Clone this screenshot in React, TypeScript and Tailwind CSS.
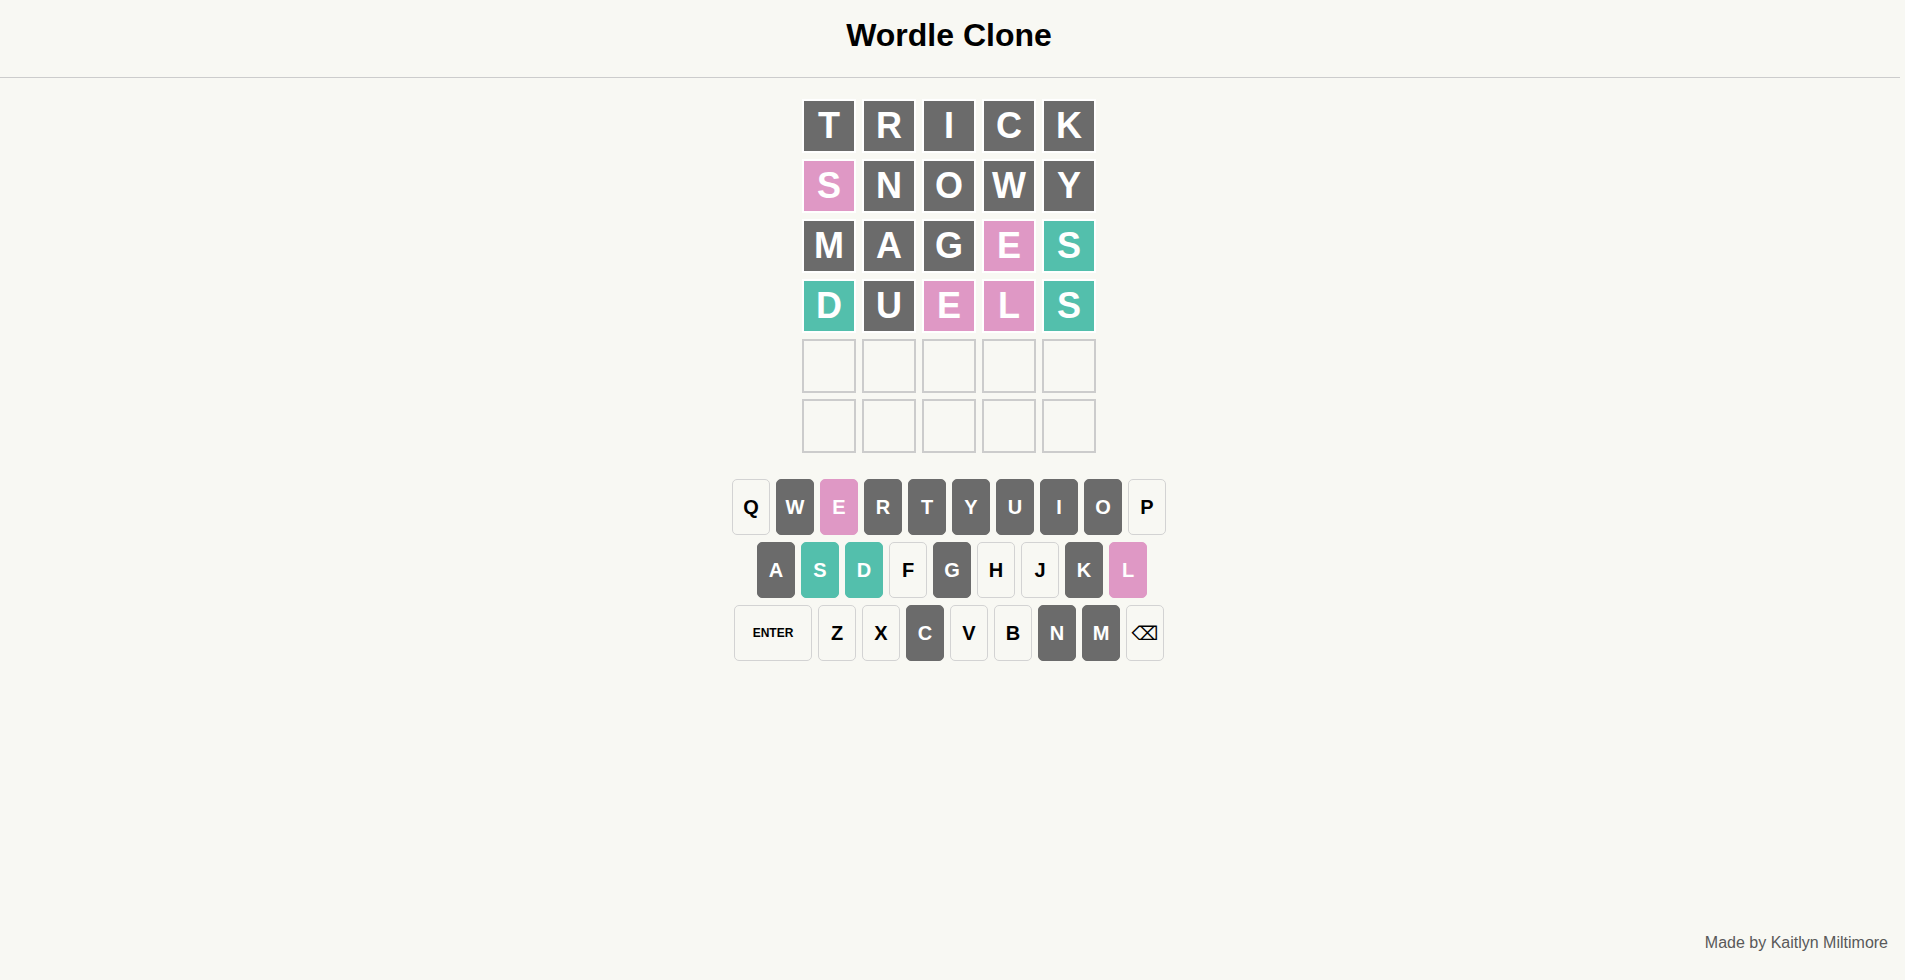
type Mark = "gray" | "pink" | "teal" | "none";

const tileColor: Record<Mark, string> = {
  gray: "bg-[#6b6b6b] border-white text-white",
  pink: "bg-[#df98c5] border-white text-white",
  teal: "bg-[#53bfac] border-white text-white",
  none: "bg-transparent border-[#cccccc] text-black",
};

const keyColor: Record<Mark, string> = {
  gray: "bg-[#6b6b6b] border-[#6b6b6b] text-white",
  pink: "bg-[#df98c5] border-[#df98c5] text-white",
  teal: "bg-[#53bfac] border-[#53bfac] text-white",
  none: "bg-[#f8f8f3] border-[#d3d3d3] text-black",
};

const guesses: [string, Mark[]][] = [
  ["TRICK", ["gray", "gray", "gray", "gray", "gray"]],
  ["SNOWY", ["pink", "gray", "gray", "gray", "gray"]],
  ["MAGES", ["gray", "gray", "gray", "pink", "teal"]],
  ["DUELS", ["teal", "gray", "pink", "pink", "teal"]],
  ["     ", ["none", "none", "none", "none", "none"]],
  ["     ", ["none", "none", "none", "none", "none"]],
];

const keyState: Record<string, Mark> = {
  W: "gray", E: "pink", R: "gray", T: "gray", Y: "gray", U: "gray", I: "gray", O: "gray",
  A: "gray", S: "teal", D: "teal", G: "gray", K: "gray", L: "pink",
  C: "gray", N: "gray", M: "gray",
};

const rows = ["QWERTYUIOP", "ASDFGHJKL", "ZXCVBNM"];

function Tile({ letter, mark }: { letter: string; mark: Mark }) {
  return (
    <div
      className={`w-[54px] h-[54px] border-2 flex items-center justify-center text-[36px] font-bold leading-none ${tileColor[mark]}`}
    >
      {letter.trim()}
    </div>
  );
}

function Key({ label, wide }: { label: string; wide?: boolean }) {
  const mark = keyState[label] ?? "none";
  return (
    <button
      className={`h-[56px] ${wide ? "w-[78px] text-[12px]" : "w-[38px] text-[20px]"} border rounded-[5px] font-bold flex items-center justify-center ${keyColor[mark]}`}
    >
      {label}
    </button>
  );
}

export default function App() {
  return (
    <div
      className="min-h-[980px] w-full bg-[#f8f8f3] flex flex-col"
      style={{ fontFamily: '"Liberation Sans", Arial, sans-serif' }}
    >
      <header className="w-[1900px] border-b border-[#cccccc]">
        <h1 className="w-[1898px] pt-[17px] pb-[23px] text-center text-[32px] leading-[37px] font-bold text-black">
          Wordle Clone
        </h1>
      </header>

      <main className="w-[1898px] flex flex-col items-center">
        <div className="mt-[21px] flex flex-col gap-[6px]">
          {guesses.map(([word, marks], r) => (
            <div key={r} className="flex gap-[6px]">
              {word.split("").map((ch, i) => (
                <Tile key={i} letter={ch} mark={marks[i]} />
              ))}
            </div>
          ))}
        </div>

        <div className="mt-[26px] flex flex-col items-center gap-[7px]">
          <div className="flex gap-[6px]">
            {rows[0].split("").map((k) => (
              <Key key={k} label={k} />
            ))}
          </div>
          <div className="flex gap-[6px] ml-[6px]">
            {rows[1].split("").map((k) => (
              <Key key={k} label={k} />
            ))}
          </div>
          <div className="flex gap-[6px]">
            <Key label="ENTER" wide />
            {rows[2].split("").map((k) => (
              <Key key={k} label={k} />
            ))}
            <button className="h-[56px] w-[38px] border rounded-[5px] bg-[#f8f8f3] border-[#d3d3d3] text-black flex items-center justify-center text-[19px]" style={{ fontFamily: '"DejaVu Sans", sans-serif' }}>
              ⌫
            </button>
          </div>
        </div>
      </main>

      <footer className="mt-auto pb-[28px] pr-[17px] text-right text-[16px] leading-[18px] text-[#595959]">
        Made by Kaitlyn Miltimore
      </footer>
    </div>
  );
}
